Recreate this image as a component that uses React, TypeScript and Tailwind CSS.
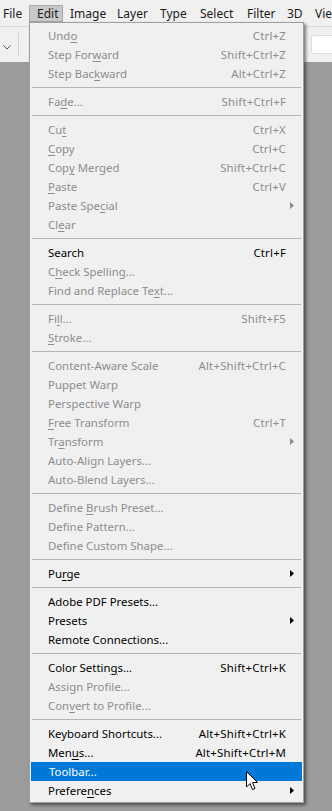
import React from 'react'

type Item =
  | { sep: true }
  | {
      sep?: false
      label: string
      u?: number
      key?: string
      on?: boolean
      sub?: boolean
      hl?: boolean
    }

const items: Item[] = [
  { label: 'Undo', u: 3, key: 'Ctrl+Z' },
  { label: 'Step Forward', u: 8, key: 'Shift+Ctrl+Z' },
  { label: 'Step Backward', u: 8, key: 'Alt+Ctrl+Z' },
  { sep: true },
  { label: 'Fade...', u: 2, key: 'Shift+Ctrl+F' },
  { sep: true },
  { label: 'Cut', u: 2, key: 'Ctrl+X' },
  { label: 'Copy', u: 0, key: 'Ctrl+C' },
  { label: 'Copy Merged', u: 3, key: 'Shift+Ctrl+C' },
  { label: 'Paste', u: 0, key: 'Ctrl+V' },
  { label: 'Paste Special', u: 9, sub: true },
  { label: 'Clear', u: 2 },
  { sep: true },
  { label: 'Search', key: 'Ctrl+F', on: true },
  { label: 'Check Spelling...', u: 1 },
  { label: 'Find and Replace Text...', u: 19 },
  { sep: true },
  { label: 'Fill...', u: 2, key: 'Shift+F5' },
  { label: 'Stroke...', u: 0 },
  { sep: true },
  { label: 'Content-Aware Scale', key: 'Alt+Shift+Ctrl+C' },
  { label: 'Puppet Warp' },
  { label: 'Perspective Warp' },
  { label: 'Free Transform', u: 0, key: 'Ctrl+T' },
  { label: 'Transform', u: 2, sub: true },
  { label: 'Auto-Align Layers...' },
  { label: 'Auto-Blend Layers...' },
  { sep: true },
  { label: 'Define Brush Preset...', u: 7 },
  { label: 'Define Pattern...' },
  { label: 'Define Custom Shape...' },
  { sep: true },
  { label: 'Purge', u: 2, sub: true, on: true },
  { sep: true },
  { label: 'Adobe PDF Presets...', on: true },
  { label: 'Presets', sub: true, on: true },
  { label: 'Remote Connections...', on: true },
  { sep: true },
  { label: 'Color Settings...', u: 12, key: 'Shift+Ctrl+K', on: true },
  { label: 'Assign Profile...' },
  { label: 'Convert to Profile...', u: 3 },
  { sep: true },
  { label: 'Keyboard Shortcuts...', key: 'Alt+Shift+Ctrl+K', on: true },
  { label: 'Menus...', u: 3, key: 'Alt+Shift+Ctrl+M', on: true },
  { label: 'Toolbar...', on: true, hl: true },
  { label: 'Preferences', u: 7, sub: true, on: true },
]

const top = ['File', 'Edit', 'Image', 'Layer', 'Type', 'Select', 'Filter', '3D', 'Vie']
const topW = ['w-[29px] pl-[3px]', 'w-[34px] pl-[7px]', 'w-[47px] pl-[7px]', 'w-[43px] pl-[7px]', 'w-[40px] pl-[7px]', 'w-[47px] pl-[7px]', 'w-[40px] pl-[7px]', 'w-[28px] pl-[7px]', 'w-[30px] pl-[7px]']

function Label({ text, u }: { text: string; u?: number }) {
  if (u === undefined) return <span>{text}</span>
  return (
    <span>
      {text.slice(0, u)}
      <span className="underline decoration-1 underline-offset-[2px]">{text[u]}</span>
      {text.slice(u + 1)}
    </span>
  )
}

function Arrow({ dark }: { dark: boolean }) {
  return (
    <svg width="4" height="7" viewBox="0 0 4 7" className="absolute right-[9px] top-[6px]">
      <path d="M0 0 L4 3.5 L0 7 Z" fill={dark ? '#000' : '#8a8a8a'} />
    </svg>
  )
}

export default function App() {
  return (
    <div className="relative w-[332px] h-[811px] overflow-hidden bg-[#9b9b9b] text-[11.4px] leading-none" style={{ fontFamily: '"Segoe UI", "Noto Sans", sans-serif' }}>
      <div className="h-[27px] bg-[#f0f0f0] border-b border-[#dadada] flex items-start whitespace-nowrap text-[12px]">
        {top.map((t, i) => (
          <div
            key={t}
            className={`${topW[i]} shrink-0 h-[17px] mt-[5px] flex items-center text-[#1b1b1b] ${i === 1 ? 'bg-[#c8c8c8] border border-[#a8a8a8] pl-[6px]' : ''}`}
          >
            {t}
          </div>
        ))}
      </div>
      <div className="h-[35px] bg-[#f0f0f0] flex items-center relative">
        <svg width="8" height="5" viewBox="0 0 8 5" className="ml-[3px] mt-[6px]">
          <path d="M0.5 0.5 L4 4 L7.5 0.5" stroke="#555" strokeWidth="1" fill="none" />
        </svg>
        <div className="ml-[7px] w-px h-[23px] bg-[#d2d2d2]" />
        <div className="ml-auto mr-[-6px] w-[27px] h-[19px] bg-white border border-[#dcdcdc] rounded-[3px]" />
      </div>

      <div className="absolute left-[29px] top-[22px] w-[275px] bg-[#f0f0f0] border border-[#a0a0a0] pt-[3px] pb-[2px] shadow-[2px_2px_3px_rgba(0,0,0,0.5)] whitespace-nowrap">
        {items.map((it, i) =>
          it.sep ? (
            <div key={i} className="h-[9px] flex items-center px-[2px]">
              <div className="h-px w-full bg-[#b4b4b4]" />
            </div>
          ) : (
            <div
              key={i}
              className={`relative h-[19px] flex items-center pl-[18px] pr-[17px] ${it.hl ? 'bg-[#0078d7] text-white mx-[1px] pl-[17px] pr-[16px]' : it.on ? 'text-black' : 'text-[#8d8d8d]'}`}
            >
              <Label text={it.label} u={it.u} />
              {it.key && <span className="ml-auto tracking-[0.2px]">{it.key}</span>}
              {it.sub && <Arrow dark={!!it.on} />}
            </div>
          )
        )}
      </div>

      <svg width="14" height="21" viewBox="0 0 14 21" className="absolute left-[246px] top-[771px]">
        <path d="M0.5 0.5 L0.5 16 L4 12.5 L6.5 18.5 L9 17.5 L6.5 11.5 L11.5 11.5 Z" fill="#fff" stroke="#000" strokeWidth="1" strokeLinejoin="round" />
      </svg>
    </div>
  )
}
